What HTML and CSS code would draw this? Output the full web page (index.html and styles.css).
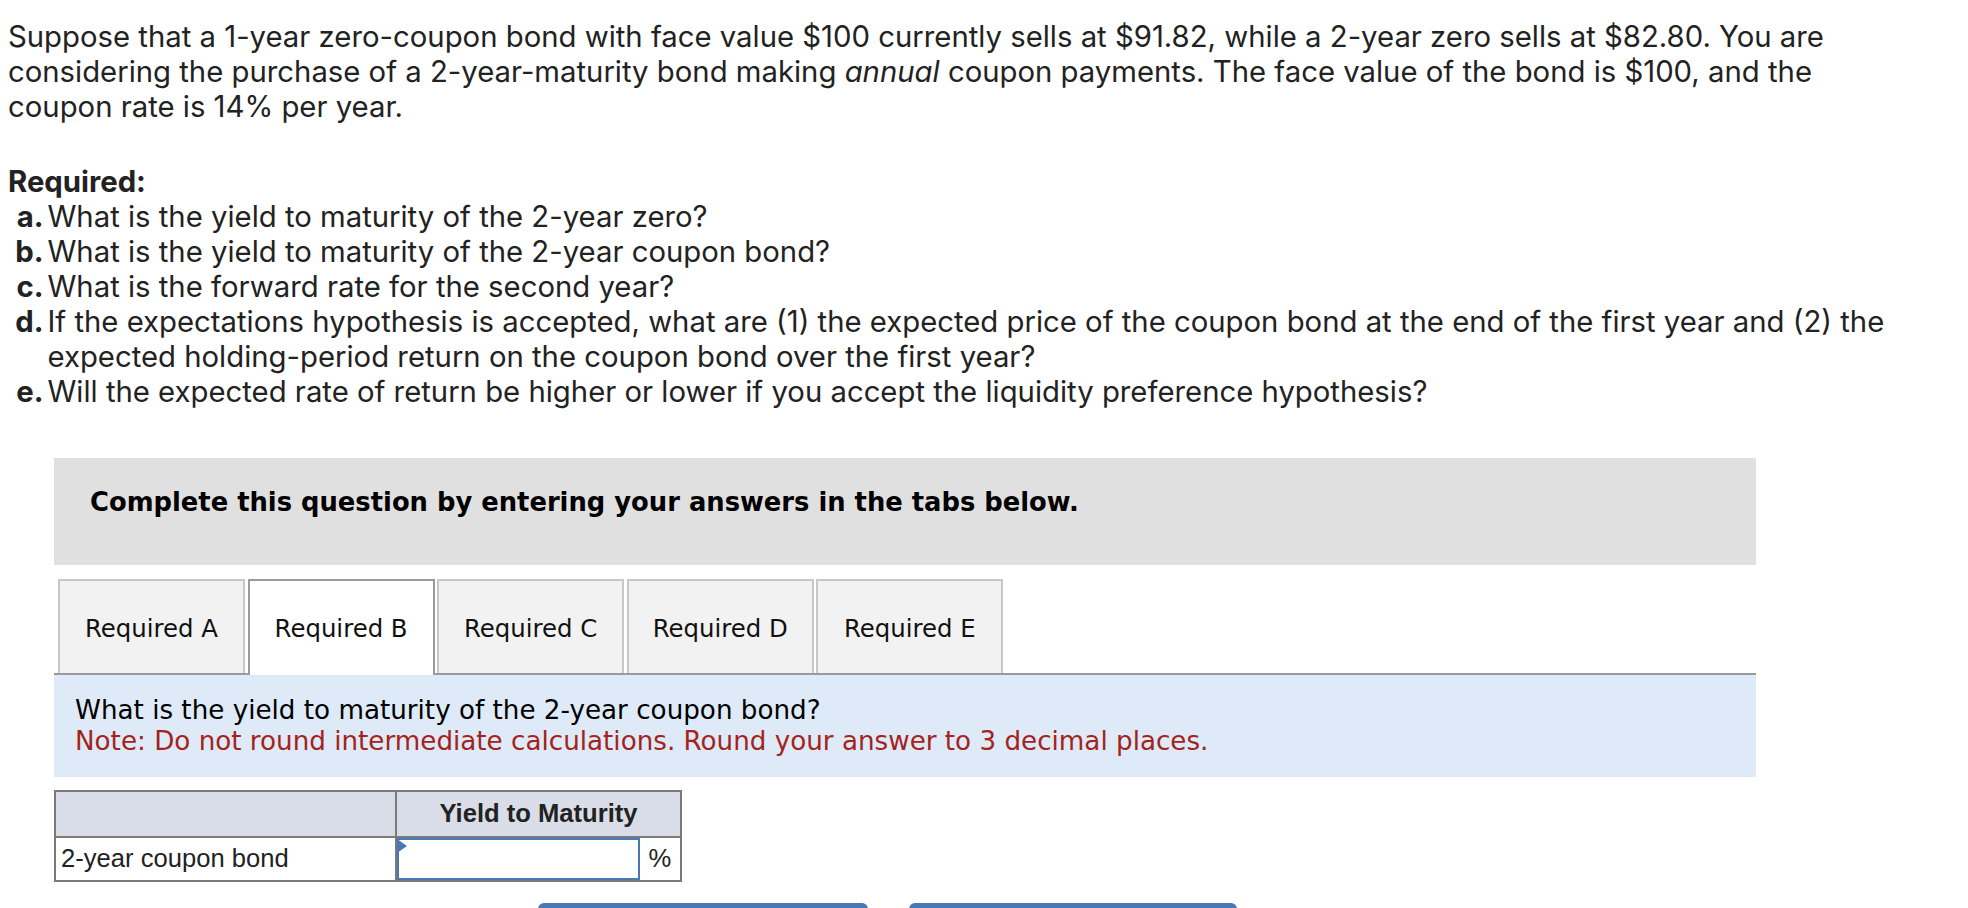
FILE: index.html
```html
<!DOCTYPE html>
<html>
<head>
<meta charset="utf-8">
<title>Bond question</title>
<link rel="stylesheet" href="styles.css">
</head>
<body>
<div class="question">
  <p class="intro">Suppose that a 1-year zero-coupon bond with face value $100 currently sells at $91.82, while a 2-year zero sells at $82.80. You are<br>considering the purchase of a 2-year-maturity bond making <em>annual</em> coupon payments. The face value of the bond is $100, and the<br>coupon rate is 14% per year.</p>
  <div class="required">
    <div class="req-title">Required:</div>
    <div class="req-list">
      <span class="lbl">a.</span><span class="txt">What is the yield to maturity of the 2-year zero?</span>
      <span class="lbl">b.</span><span class="txt">What is the yield to maturity of the 2-year coupon bond?</span>
      <span class="lbl">c.</span><span class="txt">What is the forward rate for the second year?</span>
      <span class="lbl">d.</span><span class="txt">If the expectations hypothesis is accepted, what are (1) the expected price of the coupon bond at the end of the first year and (2) the<br>expected holding-period return on the coupon bond over the first year?</span>
      <span class="lbl">e.</span><span class="txt">Will the expected rate of return be higher or lower if you accept the liquidity preference hypothesis?</span>
    </div>
  </div>
</div>

<div class="work">
  <div class="instruct">Complete this question by entering your answers in the tabs below.</div>

  <div class="tabs">
    <div class="tab">Required A</div>
    <div class="tab active">Required B</div>
    <div class="tab">Required C</div>
    <div class="tab">Required D</div>
    <div class="tab">Required E</div>
  </div>

  <div class="panel">
    <div class="panel-q">What is the yield to maturity of the 2-year coupon bond?</div>
    <div class="panel-note">Note: Do not round intermediate calculations. Round your answer to 3 decimal places.</div>
  </div>

  <table class="answer">
    <tr class="head">
      <th class="blank"></th>
      <th class="ytm" colspan="2">Yield to Maturity</th>
    </tr>
    <tr class="row">
      <td class="label">2-year coupon bond</td>
      <td class="inputcell"><div class="inputbox"><span class="marker"></span></div></td>
      <td class="unit">%</td>
    </tr>
  </table>

  <div class="navs">
    <div class="navbtn prev" title="Required A"></div>
    <div class="navbtn next" title="Required C"></div>
  </div>
</div>
</body>
</html>
```
FILE: styles.css
```css
html, body {
  background: #ffffff;
}
body {
  margin: 0;
  padding: 0 0 0 8px;
  color: #222222;
  font-family: Inter, "Open Sans", sans-serif;
}
.question {
  font-size: 29.3px;
  line-height: 35px;
}
.intro {
  margin: 0;
  padding-top: 18.6px;
}
.intro em {
  font-style: italic;
}
.required {
  margin-top: 40px;
}
.req-title {
  font-weight: 700;
}
.req-list {
  display: grid;
  grid-template-columns: 39.5px 1fr;
}
.lbl {
  font-weight: 700;
  text-align: right;
  padding-right: 4px;
}
.txt {
  display: block;
}

.work {
  margin: 49px 0 0 46px;
  width: 1702px;
  font-family: "DejaVu Sans", Verdana, sans-serif;
}
.instruct {
  background: #e0e0e0;
  height: 107px;
  box-sizing: border-box;
  padding: 29px 0 0 36px;
  font-weight: 700;
  font-size: 25.8px;
  line-height: 31px;
  color: #000;
}
.tabs {
  margin-top: 14px;
  display: flex;
  gap: 2.6px;
  padding-left: 4px;
  border-bottom: 2px solid #9a9a9a;
  height: 94px;
}
.tab {
  width: 187px;
  height: 94px;
  box-sizing: border-box;
  border: 2px solid #c8c8c8;
  border-bottom: none;
  background: #f2f2f2;
  display: flex;
  align-items: center;
  justify-content: center;
  font-size: 24.4px;
  color: #111;
  padding-top: 3px;
}
.tab.active {
  background: #ffffff;
  border-color: #9a9a9a;
  height: 96px;
  position: relative;
  z-index: 1;
  padding-bottom: 2px;
}
.panel {
  background: #deeaf7;
  height: 102px;
  box-sizing: border-box;
  padding: 20.7px 0 0 21px;
  font-size: 26.2px;
  line-height: 30.5px;
}
.panel-q {
  color: #000;
}
.panel-note {
  color: #a4231d;
}

.answer {
  margin-top: 13px;
  border-collapse: collapse;
  font-family: "Liberation Sans", Arial, sans-serif;
  font-size: 25.6px;
  color: #222;
}
.answer th, .answer td {
  border: 2px solid #7a7a7a;
  padding: 0;
}
.head th {
  background: #d9dde7;
  height: 44px;
}
.blank {
  width: 339px;
}
.ytm {
  font-weight: 700;
  text-align: center;
}
.row td {
  height: 42px;
}
.label {
  text-align: left;
  padding-left: 5px !important;
  background: #fff;
}
.inputcell {
  width: 243px;
  border-right: none !important;
  vertical-align: top;
}
.inputbox {
  position: relative;
  box-sizing: border-box;
  width: 243px;
  height: 42px;
  border: 2px solid #4a77b5;
  background: #fff;
}
.marker {
  position: absolute;
  left: -2px;
  top: -1px;
  width: 0;
  height: 0;
  border-top: 7px solid transparent;
  border-bottom: 7px solid transparent;
  border-left: 10px solid #4a77b5;
}
.unit {
  width: 40px;
  text-align: center;
  border-left: none !important;
}

.navs {
  display: flex;
  gap: 41px;
  margin-top: 21px;
  padding-left: 484px;
}
.navbtn {
  width: 330px;
  height: 52px;
  background: #4a77b5;
  border-radius: 6px;
}
.navbtn.next {
  width: 328px;
}
```
